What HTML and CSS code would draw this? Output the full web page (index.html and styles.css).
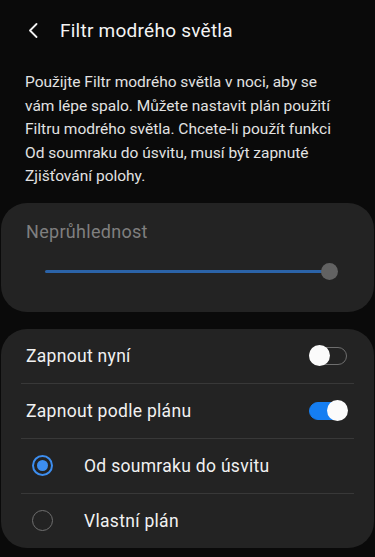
FILE: index.html
```html
<!DOCTYPE html>
<html lang="cs">
<head>
    <meta charset="UTF-8">
    <meta name="viewport" content="width=device-width, initial-scale=1.0">
    <title>Filtr modrého světla</title>
    <link rel="stylesheet" href="styles.css">
</head>
<body>
    <header class="top-bar">
        <button class="back-btn" aria-label="Zpět">
            <svg width="10" height="15" viewBox="0 0 10 15">
                <path d="M8.5 1 L2 7.5 L8.5 14" fill="none" stroke="#f2f2f2" stroke-width="1.8" stroke-linecap="round" stroke-linejoin="round"/>
            </svg>
        </button>
        <h1>Filtr modrého světla</h1>
    </header>

    <p class="intro">Použijte Filtr modrého světla v noci, aby se<br>vám lépe spalo. Můžete nastavit plán použití<br>Filtru modrého světla. Chcete-li použít funkci<br>Od soumraku do úsvitu, musí být zapnuté<br>Zjišťování polohy.</p>

    <!-- Opacity card -->
    <div class="card opacity-card">
        <div class="card-label">Neprůhlednost</div>
        <div class="slider">
            <div class="slider-track"></div>
            <div class="slider-thumb"></div>
        </div>
    </div>

    <!-- Schedule card -->
    <div class="card">
        <div class="row">
            <span>Zapnout nyní</span>
            <span class="switch"></span>
        </div>
        <div class="row">
            <span>Zapnout podle plánu</span>
            <span class="switch on"></span>
        </div>
        <div class="row radio-row">
            <span class="radio checked"></span>
            <span>Od soumraku do úsvitu</span>
        </div>
        <div class="row radio-row last">
            <span class="radio"></span>
            <span>Vlastní plán</span>
        </div>
    </div>
</body>
</html>
```

FILE: styles.css
```css
body {
    font-family: 'Roboto', 'Noto Sans', sans-serif;
    margin: 0;
    padding: 0;
    background-color: #0a0a0a;
    color: #f1f1f1;
}
.top-bar {
    display: flex;
    align-items: center;
    height: 60px;
    padding-left: 28px;
}
.back-btn {
    background: none;
    border: none;
    padding: 0;
    width: 10px;
    height: 15px;
    display: flex;
}
.top-bar h1 {
    margin: 0 0 0 22px;
    font-size: 19px;
    font-weight: 400;
    letter-spacing: 0.25px;
    color: #f4f4f4;
}
.intro {
    margin: 11px 0 0;
    padding: 0 8px 0 25px;
    font-size: 15.5px;
    line-height: 23.5px;
    color: #e2e2e2;
}
.card {
    background-color: #232323;
    border-radius: 26px;
    margin: 14px 1px 0;
}
.opacity-card {
    height: 109px;
    box-sizing: border-box;
    padding: 18px 36px 0 25px;
}
.card-label {
    font-size: 18px;
    line-height: 22px;
    letter-spacing: 0.3px;
    color: #7f7f7f;
}
.slider {
    position: relative;
    display: flex;
    align-items: center;
    height: 20px;
    margin: 19px 0 0 19px;
}
.slider-track {
    flex: 1;
    height: 3px;
    border-radius: 2px;
    background-color: #2b63a8;
}
.slider-thumb {
    width: 17px;
    height: 17px;
    border-radius: 50%;
    background-color: #626262;
    margin-left: -8px;
}
.card + .card {
    margin-top: 17px;
}
.row {
    display: flex;
    align-items: center;
    justify-content: space-between;
    height: 54px;
    margin: 0 20px;
    padding: 0 7px 0 5px;
    border-bottom: 1px solid #383838;
    font-size: 17.5px;
    letter-spacing: 0.3px;
}
.row.last {
    border-bottom: none;
}
.switch {
    position: relative;
    width: 38px;
    height: 18px;
    box-sizing: border-box;
    border: 1.5px solid #6e6e6e;
    border-radius: 10px;
}
.switch::after {
    content: '';
    position: absolute;
    left: -1.5px;
    top: -3px;
    width: 21px;
    height: 21px;
    border-radius: 50%;
    background-color: #fbfbfb;
}
.switch.on {
    background-color: #157ef2;
    border-color: #157ef2;
}
.switch.on::after {
    left: auto;
    right: -1.5px;
}
.radio-row {
    justify-content: flex-start;
    padding-left: 11px;
}
.radio {
    width: 21px;
    height: 21px;
    box-sizing: border-box;
    border: 1.5px solid #6f6f6f;
    border-radius: 50%;
    margin-right: 31px;
    display: flex;
    align-items: center;
    justify-content: center;
}
.radio.checked {
    border: 2px solid #3d8ef0;
}
.radio.checked::after {
    content: '';
    width: 11px;
    height: 11px;
    border-radius: 50%;
    background-color: #3d8ef0;
}
```
